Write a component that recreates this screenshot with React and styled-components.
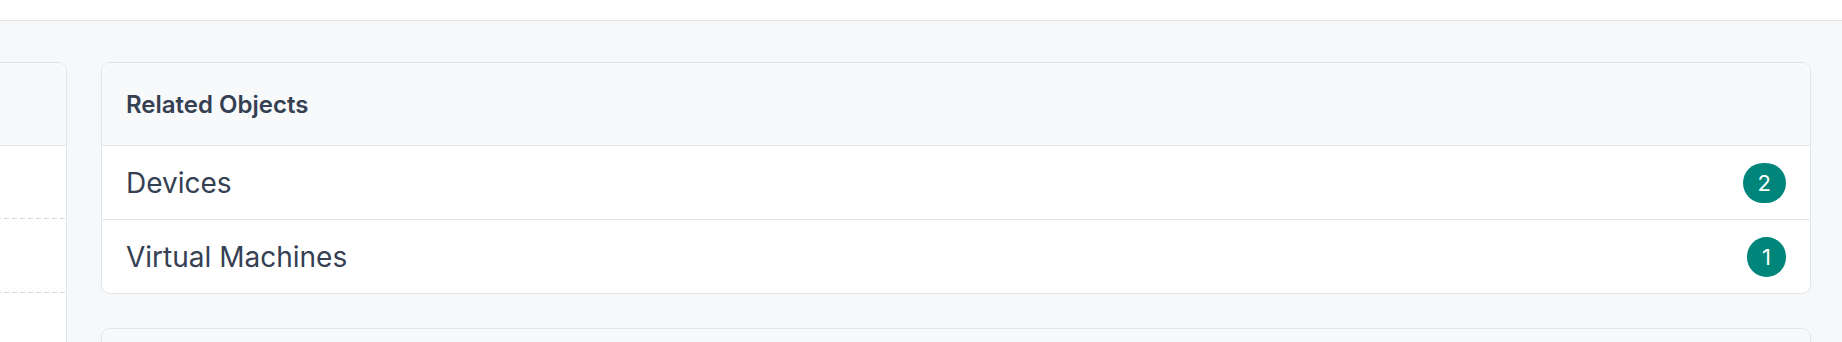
import styled, { createGlobalStyle } from 'styled-components';

const GlobalStyle = createGlobalStyle`
  body {
    margin: 0;
    background: #f7f8fa;
    font-family: Inter, "Noto Sans", sans-serif;
    color: #354052;
    overflow: hidden;
  }
`;

const TopBar = styled.div`
  height: 20px;
  background: #ffffff;
  border-bottom: 1px solid #e1e4e8;
`;

const Content = styled.main`
  display: grid;
  grid-template-columns: 600px 1fr;
  gap: 34px;
  margin-left: -533px;
  padding: 41px 31px 0 0;
`;

const Column = styled.div`
  display: flex;
  flex-direction: column;
  gap: 34px;
`;

const Card = styled.section`
  background: #ffffff;
  border: 1px solid #e1e4e8;
  border-radius: 9px;
  overflow: hidden;
  min-height: ${props => props.$minHeight || 0}px;
`;

const CardHeader = styled.header`
  display: flex;
  align-items: center;
  height: 82px;
  padding: 0 24px;
  background: #f8f9fb;
  border-bottom: 1px solid #e1e4e8;
  font-size: 24px;
  font-weight: 600;
  color: #354052;
`;

const TableRow = styled.div`
  height: 73px;
  background-image: repeating-linear-gradient(
    to right,
    #d9dde3 0 5px,
    transparent 5px 8px
  );
  background-size: 100% 1px;
  background-repeat: no-repeat;
  background-position: bottom left;
  margin-bottom: 1px;
`;

const List = styled.ul`
  list-style: none;
  margin: 0;
  padding: 0;
`;

const ListItem = styled.li`
  display: flex;
  align-items: center;
  justify-content: space-between;
  height: 73px;
  padding: 0 24px;
  font-size: 28px;
  font-weight: 400;
  color: #354052;

  & + & {
    border-top: 1px solid #e1e4e8;
  }
`;

const Badge = styled.span`
  display: inline-flex;
  align-items: center;
  justify-content: center;
  height: 40px;
  padding: 0 15px;
  border-radius: 20px;
  background: #00857b;
  color: #ffffff;
  font-size: 22px;
  font-weight: 400;
`;

const related = [
  { name: 'Devices', count: 2 },
  { name: 'Virtual Machines', count: 1 },
];

export default function App() {
  return (
    <>
      <GlobalStyle />
      <TopBar />
      <Content>
        <Column>
          <Card $minHeight={400}>
            <CardHeader />
            <TableRow />
            <TableRow />
          </Card>
        </Column>
        <Column>
          <Card>
            <CardHeader>Related Objects</CardHeader>
            <List>
              {related.map(item => (
                <ListItem key={item.name}>
                  {item.name}
                  <Badge>{item.count}</Badge>
                </ListItem>
              ))}
            </List>
          </Card>
          <Card>
            <CardHeader />
          </Card>
        </Column>
      </Content>
    </>
  );
}
